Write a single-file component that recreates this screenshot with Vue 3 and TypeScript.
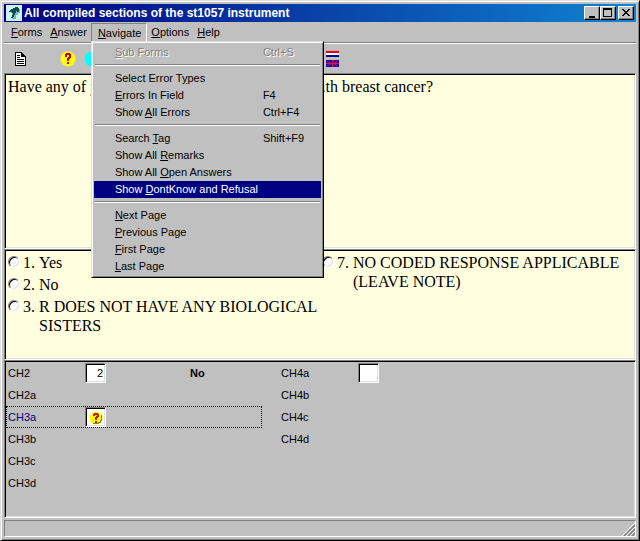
<script setup lang="ts">
import { ref } from 'vue'

interface MenuEntry {
  text: string
  key: string
  shortcut?: string
  disabled?: boolean
}

interface Field {
  name: string
  value?: string
  entry?: boolean
  remark?: string
  unknown?: boolean
}

// "key" is the part of the text that carries the underline.
const menus: MenuEntry[] = [
  { text: 'Forms', key: 'F' },
  { text: 'Answer', key: 'A' },
  { text: 'Navigate', key: 'N' },
  { text: 'Options', key: 'O' },
  { text: 'Help', key: 'H' },
]

const navigateGroups: MenuEntry[][] = [
  [{ text: 'Sub Forms', key: 'S', shortcut: 'Ctrl+S', disabled: true }],
  [
    { text: 'Select Error Types', key: 'y' },
    { text: 'Errors In Field', key: 'E', shortcut: 'F4' },
    { text: 'Show All Errors', key: 'A', shortcut: 'Ctrl+F4' },
  ],
  [
    { text: 'Search Tag', key: 'T', shortcut: 'Shift+F9' },
    { text: 'Show All Remarks', key: 'R' },
    { text: 'Show All Open Answers', key: 'O' },
    { text: 'Show DontKnow and Refusal', key: 'D' },
  ],
  [
    { text: 'Next Page', key: 'N' },
    { text: 'Previous Page', key: 'P' },
    { text: 'First Page', key: 'F' },
    { text: 'Last Page', key: 'L' },
  ],
]

const openMenu = ref('Navigate')
const highlighted = ref('Show DontKnow and Refusal')

const answers = [
  [
    { code: '1.', text: 'Yes' },
    { code: '2.', text: 'No' },
    { code: '3.', text: 'R DOES NOT HAVE ANY BIOLOGICAL SISTERS' },
  ],
  [{ code: '7.', text: 'NO CODED RESPONSE APPLICABLE (LEAVE NOTE)' }],
]
const answer = ref('')

const fieldColumns = ref<Field[][]>([
  [
    { name: 'CH2', entry: true, value: '2', remark: 'No' },
    { name: 'CH2a' },
    { name: 'CH3a', entry: true, value: '', unknown: true },
    { name: 'CH3b' },
    { name: 'CH3c' },
    { name: 'CH3d' },
  ],
  [
    { name: 'CH4a', entry: true, value: '' },
    { name: 'CH4b' },
    { name: 'CH4c' },
    { name: 'CH4d' },
  ],
])

function split(entry: MenuEntry): [string, string, string] {
  const at = entry.text.indexOf(entry.key)
  return [entry.text.slice(0, at), entry.key, entry.text.slice(at + entry.key.length)]
}

function toggle(name: string) {
  openMenu.value = openMenu.value === name ? '' : name
}
</script>

<template>
  <main class="window">
    <header class="titlebar">
      <svg class="app-icon" viewBox="0 0 16 16" aria-hidden="true">
        <rect width="16" height="16" fill="#cdf3f3" />
        <path d="M6 4h2V3h5v1h1v4h-2v2h-2v4H6v-1h1v-3H6V8H5V6h1z" fill="#7fb4b4" />
        <path d="M4 5h1V4h2V3h2V2h3v1h1v4h-2V6h-1v2H9v2H8v2H7v1H5v-1h1v-2h1V8H6V7H3V6h1z" fill="#064f4f" />
      </svg>
      <h1>All compiled sections of the st1057 instrument</h1>
      <div class="window-buttons">
        <button type="button" aria-label="Minimize">
          <svg viewBox="0 0 12 10"><path d="M3 8h6v2H3z" /></svg>
        </button>
        <button type="button" aria-label="Maximize">
          <svg viewBox="0 0 12 10"><path fill-rule="evenodd" d="M1 0h9v9H1z M2 2v6h7V2z" /></svg>
        </button>
        <button type="button" class="close" aria-label="Close">
          <svg viewBox="0 0 12 10">
            <path d="M2 1h2v1h1v1h2V2h1V1h2v1H9v1H8v1H7v1h1v1h1v1h1v1H8V7H7V6H5v1H4v1H2V7h1V6h1V5h1V4H4V3H3V2H2z" />
          </svg>
        </button>
      </div>
    </header>

    <nav class="menubar">
      <div v-for="menu in menus" :key="menu.text" class="menu-slot">
        <button
          type="button"
          class="menu-title"
          :class="{ open: openMenu === menu.text }"
          @click="toggle(menu.text)"
        ><u>{{ split(menu)[1] }}</u>{{ split(menu)[2] }}</button>
        <div v-if="menu.text === 'Navigate' && openMenu === 'Navigate'" class="popup">
          <div v-for="(group, g) in navigateGroups" :key="g" class="popup-group">
            <button
              v-for="item in group"
              :key="item.text"
              type="button"
              class="popup-item"
              :class="{ active: highlighted === item.text }"
              :disabled="item.disabled"
              @mouseenter="highlighted = item.text"
            >
              <span>{{ split(item)[0] }}<u>{{ split(item)[1] }}</u>{{ split(item)[2] }}</span>
              <span>{{ item.shortcut }}</span>
            </button>
          </div>
        </div>
      </div>
    </nav>

    <div class="toolbar">
      <button type="button" class="tool" aria-label="Form">
        <svg width="12" height="14" viewBox="0 0 12 14">
          <path d="M1 1h6l3 3v9H1z" fill="#fff" />
          <path fill-rule="evenodd" d="M0 0h7v1h1v1h1v1h1v1h1v10H0z M1 1v12h9V5H6V1z" />
          <path d="M2 3h3v1H2z M2 5h3v1H2z M2 7h7v1H2z M2 9h7v1H2z M2 11h7v1H2z" />
        </svg>
      </button>
      <button type="button" class="tool ask" aria-label="Don't know">
        <svg width="16" height="16" viewBox="0 0 16 16">
          <circle cx="8" cy="8" r="7.5" fill="#ff0" />
          <path d="M5 3h1V2h4v1h1v4h-1v1H9v2H7V7h1V6h1V4H7v2H5z M7 11h2v2H7z" fill="#c00000" />
        </svg>
      </button>
      <button type="button" class="tool" aria-label="Refusal">
        <svg width="16" height="16" viewBox="0 0 16 16">
          <circle cx="8" cy="8" r="7.5" fill="#0ff" />
          <path d="M7 3h2v6H7z M7 11h2v2H7z" />
        </svg>
      </button>
      <button type="button" class="tool language" aria-label="Language">
        <svg width="13" height="17" viewBox="0 0 13 17">
          <rect width="13" height="1" fill="#eda0a0" />
          <rect y="1" width="13" height="2" fill="#c01818" />
          <rect y="3" width="13" height="2" fill="#fff" />
          <rect y="5" width="13" height="2" fill="#0000a0" />
          <rect y="10" width="13" height="7" fill="#1000a8" />
          <path d="M1 11l4 2M12 11l-4 2M1 16l4-2M12 16l-4-2" stroke="#c01870" />
          <path d="M0 13h13v1H0z M6 10h1v7H6z" fill="#e01050" />
        </svg>
      </button>
    </div>

    <section class="panel question">
      <p>
        <span>Have any of y</span>
        <span>with breast cancer?</span>
      </p>
    </section>

    <section class="panel answers">
      <div v-for="(column, c) in answers" :key="c" class="answer-column">
        <label v-for="option in column" :key="option.code" class="answer">
          <input v-model="answer" type="radio" name="answer" :value="option.code" />
          <span class="code">{{ option.code }}</span>
          <span>{{ option.text }}</span>
        </label>
      </div>
    </section>

    <section class="panel form">
      <div v-for="(column, c) in fieldColumns" :key="c" class="field-column">
        <div v-for="field in column" :key="field.name" class="field" :class="{ current: field.unknown }">
          <label :for="field.entry ? field.name : undefined">{{ field.name }}</label>
          <div class="entry">
            <input v-if="field.entry" :id="field.name" v-model="field.value" type="text" />
            <svg v-if="field.unknown" class="mark" width="14" height="14" viewBox="0 0 14 14" aria-hidden="true">
              <circle cx="7" cy="7" r="6.5" fill="#ff0" />
              <path d="M12 3v1h1v6h-1v2h-2v1H4v-1h5v-1h2V9h1z" fill="#a08000" />
              <path d="M4 3h1V2h4v1h1v3H9v1H8v2H6V6h1V5h1V4H6v1H4z M6 10h2v2H6z" fill="#c02000" />
            </svg>
          </div>
          <b>{{ field.remark }}</b>
        </div>
      </div>
    </section>

    <footer class="statusbar">
      <svg width="13" height="13" viewBox="0 0 13 13" aria-hidden="true">
        <path d="M0 13L13 0M4 13l9-9M8 13l5-5" stroke="#fff" />
        <path d="M2 13L13 2M6 13l7-7M10 13l3-3" stroke="#808080" stroke-width="1.5" />
      </svg>
    </footer>
  </main>
</template>

<style>
body {
  background: #c0c0c0;
}
</style>

<style scoped>
.window {
  box-sizing: border-box;
  min-height: 100vh;
  display: flex;
  flex-direction: column;
  padding: 3px;
  border: 1px solid;
  border-color: #dfdfdf #000 #000 #dfdfdf;
  box-shadow: inset 1px 1px #fff, inset -1px -1px #808080;
  background: #c0c0c0;
  color: #000;
  font: 11px/17px "Liberation Sans", Arial, sans-serif;
}

button {
  margin: 0;
  padding: 0;
  border: 0;
  background: none;
  color: inherit;
  font: inherit;
  text-align: left;
}

svg {
  display: block;
}

u {
  text-underline-offset: 1px;
}

.titlebar {
  display: flex;
  align-items: center;
  gap: 2px;
  height: 18px;
  padding: 0 2px;
  background: linear-gradient(90deg, #000080, #1084d0);
  color: #fff;
}

.app-icon {
  width: 16px;
  height: 16px;
}

h1 {
  flex: 1;
  margin: 0;
  font-size: 12px;
  line-height: 18px;
}

.window-buttons {
  display: flex;
}

.window-buttons button {
  box-sizing: border-box;
  width: 16px;
  height: 14px;
  padding: 1px;
  border: 1px solid;
  border-color: #fff #000 #000 #fff;
  box-shadow: inset -1px -1px #808080;
  background: #c0c0c0;
}

.window-buttons svg {
  width: 12px;
  height: 10px;
}

.window-buttons .close {
  margin-left: 2px;
}

.menubar {
  display: flex;
  height: 20px;
  padding-left: 3px;
  border-bottom: 1px solid #808080;
  box-shadow: 0 1px #fff;
}

.menu-slot {
  position: relative;
  padding-top: 1px;
}

.menu-title {
  display: block;
  padding: 0 3px;
  border: 1px solid transparent;
}

.menu-title.open {
  padding: 1px 5px 0 6px;
  line-height: 16px;
  border-color: #808080 #fff #fff #808080;
}

.popup {
  position: absolute;
  z-index: 1;
  top: 19px;
  left: 0;
  width: 227px;
  padding: 2px;
  border: 1px solid;
  border-color: #dfdfdf #000 #000 #dfdfdf;
  box-shadow: inset 1px 1px #fff, inset -1px -1px #808080;
  background: #c0c0c0;
}

.popup-group + .popup-group::before {
  content: "";
  display: block;
  height: 1px;
  margin: 3px 1px 4px;
  border-top: 1px solid #808080;
  background: #fff;
}

.popup-item {
  display: grid;
  grid-template-columns: 148px 1fr;
  width: 100%;
  height: 17px;
  padding-left: 21px;
  white-space: nowrap;
}

.popup-item.active {
  background: #000080;
  color: #fff;
}

.popup-item:disabled {
  color: #808080;
  text-shadow: 1px 1px #fff;
}

.toolbar {
  display: flex;
  align-items: center;
  height: 29px;
  margin-top: 1px;
  padding-left: 11px;
}

.tool.ask {
  margin: 0 8px 0 33px;
}

.tool.language {
  margin-left: 226px;
}

.panel {
  box-sizing: border-box;
  padding: 1px;
  border: 1px solid;
  border-color: #808080 #fff #fff #808080;
  box-shadow: inset 1px 1px #000, inset -1px -1px #dfdfdf;
}

.question,
.answers {
  background: #ffffe0;
  font: 16px/19px "Liberation Serif", "Times New Roman", serif;
}

.question {
  flex: 176 1 0;
}

.question p {
  display: flex;
  justify-content: space-between;
  max-width: 425px;
  margin: 2px;
}

.answers {
  flex: 110 1 0;
  display: grid;
  grid-template-columns: 1fr 1fr;
}

.answer-column {
  display: flex;
  flex-direction: column;
  gap: 3px;
  padding: 2px 2px 0;
}

.answer {
  display: flex;
}

.answer input {
  appearance: none;
  flex: none;
  width: 12px;
  height: 12px;
  margin: 3px 3px 0 0;
  border: 1px solid;
  border-color: #808080 #fff #fff #808080;
  border-radius: 50%;
  background: #fff;
  box-shadow: inset 1px 1px #000, inset -1px -1px #dfdfdf;
}

.answer input:checked {
  background: radial-gradient(#000 2px, #fff 3px);
}

.code {
  flex: none;
  width: 16px;
}

.form {
  flex: 158 1 0;
  display: grid;
  grid-template-columns: 273px 1fr;
}

.field {
  box-sizing: border-box;
  display: grid;
  grid-template-columns: 77px 105px 1fr;
  align-items: center;
  width: 256px;
  height: 22px;
  padding: 0 1px;
  border: 1px dotted transparent;
  line-height: 18px;
}

.field.current {
  border-color: #000;
}

.field.current label {
  color: #000080;
}

.entry {
  position: relative;
}

.entry input {
  box-sizing: border-box;
  display: block;
  width: 21px;
  height: 20px;
  padding: 1px 2px;
  border: 1px solid;
  border-color: #808080 #fff #fff #808080;
  border-radius: 0;
  outline: none;
  box-shadow: inset 1px 1px #000, inset -1px -1px #dfdfdf;
  background: #fff;
  font: inherit;
  text-align: right;
}

.mark {
  position: absolute;
  top: 4px;
  left: 4px;
}

.statusbar {
  display: flex;
  align-items: flex-end;
  justify-content: flex-end;
  height: 15px;
  margin-top: 2px;
  border: 1px solid;
  border-color: #808080 #fff #fff #808080;
}
</style>
